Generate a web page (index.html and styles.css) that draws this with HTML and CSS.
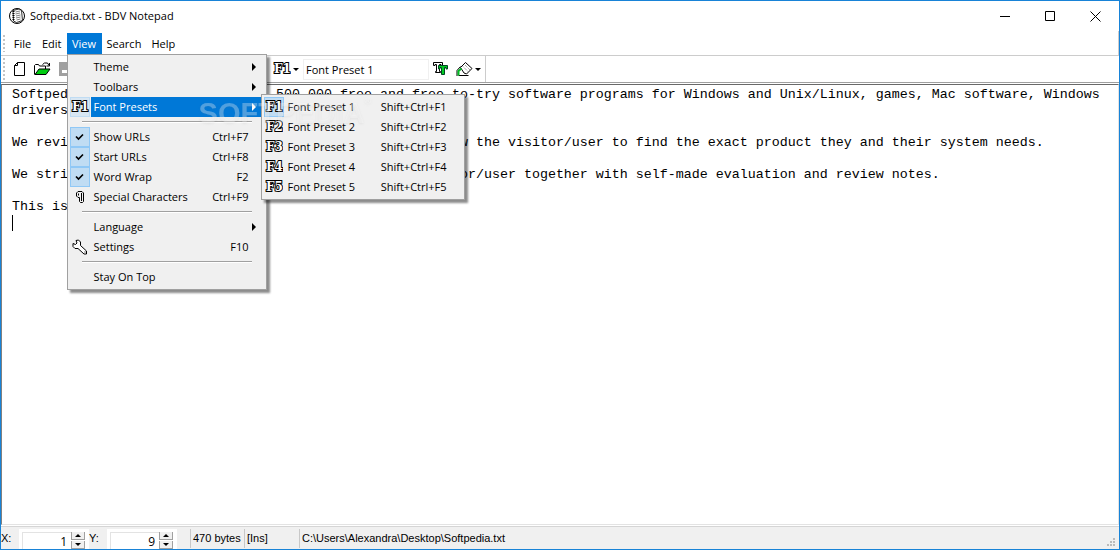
FILE: index.html
```
<!DOCTYPE html>
<html lang="en">
<head>
<meta charset="utf-8">
<title>Softpedia.txt - BDV Notepad</title>
<link rel="stylesheet" href="styles.css">
</head>
<body>
<div class="window">
  <header class="titlebar">
    <svg class="app-icon" width="18" height="18" viewBox="0 0 18 18" fill="none" stroke="#000">
      <circle cx="9" cy="9" r="7.5" fill="#fff"/>
      <path d="M5 3.500l6-1.500 2.500 1.500 1 10-6 2-3-1.500z" fill="#fff" stroke-width=".8"/>
      <path d="M7.500 5l4.500-1M7.500 7l4.500-1M8 9l4.500-1M8 11l4.500-1M8.500 13l4-1" stroke-width=".5"/>
      <path d="M5.500 4v10" stroke-dasharray="1 1" stroke-width="2"/>
    </svg>
    <h1 class="title">Softpedia.txt - BDV Notepad</h1>
    <div class="caption">
      <button class="caption-btn" aria-label="Minimize"><svg width="11" height="11" viewBox="0 0 11 11"><path d="M0 5.500h10" stroke="#000"/></svg></button>
      <button class="caption-btn" aria-label="Maximize"><svg width="11" height="11" viewBox="0 0 11 11"><path d="M.5.5h9v9h-9z" fill="none" stroke="#000"/></svg></button>
      <button class="caption-btn" aria-label="Close"><svg width="11" height="11" viewBox="0 0 11 11"><path d="M.5.5l10 10M10.500.5l-10 10" stroke="#000"/></svg></button>
    </div>
  </header>

  <nav class="menubar">
    <span class="grip"></span>
    <button class="menu-btn">File</button>
    <button class="menu-btn">Edit</button>
    <div class="menu-host">
      <button class="menu-btn active">View</button>
      <div class="menu main-menu" role="menu">
        <button class="item" role="menuitem"><span class="icon"></span><span class="label">Theme</span><span class="arrow"></span></button>
        <button class="item" role="menuitem"><span class="icon"></span><span class="label">Toolbars</span><span class="arrow"></span></button>
        <div class="sub-host">
          <button class="item selected" role="menuitem"><span class="icon soft"><svg width="18" height="14"><text class="glyph" x="1" y="11">F1</text></svg></span><span class="label">Font Presets</span><span class="arrow"></span></button>
          <div class="menu sub-menu" role="menu">
            <button class="item" role="menuitem"><span class="icon checked"><svg width="18" height="14"><text class="glyph" x="1" y="11">F1</text></svg></span><span class="label">Font Preset 1</span><span class="keys">Shift+Ctrl+F1</span></button>
            <button class="item" role="menuitem"><span class="icon"><svg width="18" height="14"><text class="glyph" x="1" y="11">F2</text></svg></span><span class="label">Font Preset 2</span><span class="keys">Shift+Ctrl+F2</span></button>
            <button class="item" role="menuitem"><span class="icon"><svg width="18" height="14"><text class="glyph" x="1" y="11">F3</text></svg></span><span class="label">Font Preset 3</span><span class="keys">Shift+Ctrl+F3</span></button>
            <button class="item" role="menuitem"><span class="icon"><svg width="18" height="14"><text class="glyph" x="1" y="11">F4</text></svg></span><span class="label">Font Preset 4</span><span class="keys">Shift+Ctrl+F4</span></button>
            <button class="item" role="menuitem"><span class="icon"><svg width="18" height="14"><text class="glyph" x="1" y="11">F5</text></svg></span><span class="label">Font Preset 5</span><span class="keys">Shift+Ctrl+F5</span></button>
          </div>
        </div>
        <div class="sep"></div>
        <button class="item" role="menuitem"><span class="icon checked"><svg width="9" height="8" viewBox="0 0 9 8"><path d="M1 3.500l2.500 2.500 4.500-4.500" fill="none" stroke="#000" stroke-width="1.700"/></svg></span><span class="label">Show URLs</span><span class="keys">Ctrl+F7</span></button>
        <button class="item" role="menuitem"><span class="icon checked"><svg width="9" height="8" viewBox="0 0 9 8"><path d="M1 3.500l2.500 2.500 4.500-4.500" fill="none" stroke="#000" stroke-width="1.700"/></svg></span><span class="label">Start URLs</span><span class="keys">Ctrl+F8</span></button>
        <button class="item" role="menuitem"><span class="icon checked"><svg width="9" height="8" viewBox="0 0 9 8"><path d="M1 3.500l2.500 2.500 4.500-4.500" fill="none" stroke="#000" stroke-width="1.700"/></svg></span><span class="label">Word Wrap</span><span class="keys">F2</span></button>
        <button class="item" role="menuitem"><span class="icon"><svg width="8" height="12" viewBox="0 0 8 12" fill="none" stroke="#000"><path d="M3.500 6.500H2L.5 5V2L2 .5h4L7.500 2v8.500l-1 1h-2l-1-1zM5.500 2v8M2.500 2.500v2"/></svg></span><span class="label">Special Characters</span><span class="keys">Ctrl+F9</span></button>
        <div class="sep"></div>
        <button class="item" role="menuitem"><span class="icon"></span><span class="label">Language</span><span class="arrow"></span></button>
        <button class="item" role="menuitem"><span class="icon"><svg width="16" height="16" viewBox="0 0 16 16" fill="#fff" stroke="#000"><path d="M4 1.500l1 2.500-1.500 1.500L1 4.500v3L3 9.500h3l6 5.500h2.500V12L8.500 6.500V3L6.500 1z"/><path d="M12.500 13h1"/></svg></span><span class="label">Settings</span><span class="keys">F10</span></button>
        <div class="sep"></div>
        <button class="item" role="menuitem"><span class="icon"></span><span class="label">Stay On Top</span></button>
        <div class="watermark">SOFTPEDIA<sup class="mark">®</sup></div>
      </div>
    </div>
    <button class="menu-btn">Search</button>
    <button class="menu-btn">Help</button>
  </nav>

  <div class="toolbar">
    <div class="tools file-tools">
      <span class="grip"></span>
      <button class="tool" aria-label="New"><svg width="12" height="14" viewBox="0 0 12 14"><path d="M3.500.5h7v13H.5v-10zM3.500.5v3h-3" fill="#fff" stroke="#000"/></svg></button>
      <button class="tool" aria-label="Open"><svg width="17" height="14" viewBox="0 0 17 14"><path d="M.5 12.500v-9l1-1h3l1 1.500h6v3" fill="#fff" stroke="#000"/><path d="M1 12.500l4-5.500h11l-4 5.500z" fill="#0c1" stroke="#000"/><path d="M8.500 2.500l2-1.500h3l1.500 2.500M15.500 1v3h-3" fill="none" stroke="#000"/></svg></button>
      <button class="tool" aria-label="Save" disabled><svg width="14" height="14" viewBox="0 0 14 14"><path d="M0 0h14v14H0z" fill="#a0a0a0"/><path d="M3 8h8v3H3z" fill="#fff"/></svg></button>
    </div>
    <div class="tools font-tools">
      <button class="tool drop" aria-label="Font preset list"><svg width="18" height="14"><text class="glyph" x="1" y="11">F1</text></svg><span class="caret"></span></button>
      <input class="preset" type="text" aria-label="Font preset" value="Font Preset 1">
      <button class="tool" aria-label="Font"><svg width="15" height="14" viewBox="0 0 15 14"><path d="M.5.5h9v3H8v-1H6.500v7h1v1h-5v-1h1v-7H2v1H.5z" fill="#fff" stroke="#000"/><path d="M5.500 3.500h9v3.500H13V5.500h-1.500v7h-3v-7H7V7H5.500z" fill="#0c2" stroke="#042"/></svg></button>
      <button class="tool drop" aria-label="Highlight"><svg width="17" height="15" viewBox="0 0 17 15"><path d="M4.500 5.500l5-5 6.500 6-5.500 5.500-2.500-1z" fill="#fff" stroke="#000"/><path d="M7 4.500l5 5M9 3l5 5" stroke="#777" stroke-dasharray="1 1"/><path d="M4.500 4.500L1 8.500v5.500M2.500 13.500h10" fill="none" stroke="#000"/><path d="M5.500 6.500L2.500 9v4.500" fill="none" stroke="#0b2" stroke-width="2"/></svg><span class="caret"></span></button>
    </div>
  </div>

  <main class="editor">
    <p class="line">Softpedia is a library of over 1,500,000 free and free-to-try software programs for Windows and Unix/Linux, games, Mac software, Windows<br>drivers and IT articles.</p>
    <p class="line">We review and categorize these products in order to allow the visitor/user to find the exact product they and their system needs.</p>
    <p class="line">We strive to deliver only the best products to the visitor/user together with self-made evaluation and review notes.</p>
    <p class="line">This is a text file.</p>
    <span class="cursor"></span>
  </main>

  <footer class="status">
    <label class="axis" for="pos-x">X:</label>
    <div class="spin"><input class="num" id="pos-x" type="text" value="1"><span class="steps"><button class="step" aria-label="X up"><span class="up"></span></button><button class="step" aria-label="X down"><span class="down"></span></button></span></div>
    <label class="axis" for="pos-y">Y:</label>
    <div class="spin"><input class="num" id="pos-y" type="text" value="9"><span class="steps"><button class="step" aria-label="Y up"><span class="up"></span></button><button class="step" aria-label="Y down"><span class="down"></span></button></span></div>
    <span class="cell size">470 bytes</span>
    <span class="cell mode">[Ins]</span>
    <span class="cell path">C:\Users\Alexandra\Desktop\Softpedia.txt</span>
    <svg class="resize" width="9" height="9" viewBox="0 0 9 9" fill="#bbb"><path d="M6 0h2v2H6zM3 3h2v2H3zM6 3h2v2H6zM0 6h2v2H0zM3 6h2v2H3zM6 6h2v2H6z"/></svg>
  </footer>
</div>
</body>
</html>
```
FILE: styles.css
```
* { box-sizing: border-box; }
body { margin: 0; }
button, input {
  font: inherit; color: inherit; background: none;
  border: 0; padding: 0; margin: 0; border-radius: 0; outline: 0;
}
svg { display: block; flex: none; }

.window {
  display: flex; flex-direction: column;
  height: 100vh; overflow: hidden;
  border: 1px solid #1883d7;
  background: #fff; color: #000;
  font: 11px/16px "Open Sans", "Noto Sans", sans-serif;
}

.titlebar { display: flex; align-items: center; height: 30px; padding-left: 7px; flex: none; }
.title { margin: 0 auto 0 4px; font-size: 11px; font-weight: 400; }
.caption { display: flex; margin-right: 1px; }
.caption-btn { display: flex; align-items: center; justify-content: center; width: 45px; height: 28px; }

.grip {
  width: 2px; align-self: stretch; margin: 2px 0 2px 2px; flex: none;
  background: repeating-linear-gradient(#c4c4c4 0 2px, #fff 2px 4px);
}
.menubar {
  display: flex; align-items: stretch; height: 25px; padding: 2px 0 1px; flex: none;
  border-bottom: 1px solid #ccc; border-right: 1px solid #ccc;
}
.menubar > .grip { margin-right: 3px; }
.menu-btn { height: 21px; padding: 0 5px; min-width: 29px; }
.menu-host { position: relative; }
.active { background: #0078d7; color: #fff; min-width: 35px; }

.menu {
  position: absolute; z-index: 2; padding: 2px;
  background: #f0f0f0; color: #000; border: 1px solid #a0a0a0;
  box-shadow: 3px 3px 2px rgba(0, 0, 0, .45);
}
.main-menu { left: 0; top: 21px; width: 200px; }
.sub-menu { left: 191px; top: -3px; width: 204px; }
.sub-host { position: relative; }
.item { display: flex; align-items: center; width: 100%; height: 20px; text-align: left; white-space: nowrap; }
.icon { display: flex; align-items: center; justify-content: center; width: 20px; height: 20px; margin-right: 1px; flex: none; }
.checked { background: #c0dcf3; border: 1px solid #90c8f6; }
.soft { background: #d8e6f2; border: 1px solid #c0dcf3; }
.label { flex: 1; padding-left: 3px; line-height: 20px; }
.keys { padding-right: 15px; }
.selected .label { background: #0078d7; color: #fff; }
.selected .arrow { background: #0078d7; }
.arrow { position: relative; width: 13px; height: 20px; }
.arrow::before {
  content: ""; position: absolute; left: 1px; top: 6px;
  border: 4px solid transparent; border-left-color: currentColor; border-right: 0;
}
.selected .arrow { color: #fff; }
.sep { height: 10px; padding: 4px 12px; }
.sep::before { content: ""; display: block; height: 1px; background: #a0a0a0; border-bottom: 1px solid #fff; }
.glyph {
  font: bold 12px "DejaVu Serif", serif; fill: #fff;
  stroke: #000; stroke-width: 2px; paint-order: stroke;
}
.watermark {
  position: absolute; left: 131px; top: 42px; z-index: 3; pointer-events: none;
  font: bold 29px/32px "Liberation Sans", Arial, sans-serif;
  color: rgba(255, 255, 255, .3); filter: drop-shadow(0 1px 1px rgba(110, 110, 110, .3));
}
.mark { font-size: 9px; line-height: 9px; vertical-align: top; }

.toolbar { display: flex; height: 27px; flex: none; border-bottom: 1px solid #a0a0a0; }
.tools { display: flex; align-items: center; height: 100%; }
.file-tools { width: 270px; gap: 8px; }
.file-tools .grip { margin-right: 1px; }
.font-tools { border-right: 1px solid #ccc; padding-left: 2px; width: 215px; }
.tool { display: flex; align-items: center; justify-content: center; flex: none; }
.drop { gap: 2px; }
.caret { border: 3px solid transparent; border-top-color: #000; border-bottom: 0; }
.preset { width: 126px; height: 21px; padding: 0 2px; margin: 0 4px; border: 1px solid #f0f0f0; }
.font-tools .preset + .tool { margin-right: 8px; }

.editor {
  flex: 1; min-height: 0; padding: 2px 9px;
  border: 1px solid #e3e3e3; border-top: 1px solid #696969; border-left: 1px solid #808080;
  font: 10pt/16px "Liberation Mono", "Courier New", monospace;
}
.line { margin: 0 0 16px 1px; white-space: pre; }
.line:nth-last-of-type(1) { margin-bottom: 0; }
.cursor { display: block; width: 1px; height: 16px; margin-left: 1px; background: #000; }

.toolbar { margin-bottom: 1px; }

.status {
  display: flex; align-items: stretch; height: 24px; flex: none;
  border-top: 1px solid #fff; background: #f0f0f0;
  font: 11px/16px "Liberation Sans", Arial, sans-serif;
  box-shadow: inset 0 1px #d5d5d5;
}
.axis { width: 18px; align-self: center; }
.spin { display: flex; align-items: stretch; width: 70px; margin-top: 3px; padding: 3px 4px 0 3px; background: #fff; }
.num { flex: 1; min-width: 0; text-align: right; padding-right: 4px; border: solid #e3e3e3; border-width: 1px 0 0 1px; font: 12px/15px "Open Sans", sans-serif; }
.steps { display: flex; flex-direction: column; width: 14px; gap: 1px; }
.step { flex: 1; display: flex; align-items: center; justify-content: center; background: #f0f0f0; border: solid #a0a0a0; border-width: 0 1px 1px; }
.up, .down { border: 3px solid transparent; }
.up { border-bottom-color: #000; border-top: 0; }
.down { border-top-color: #000; border-bottom: 0; }
.cell { border-left: 1px solid #c8c8c8; padding: 0 2px; margin: 3px 0 1px; line-height: 18px; }
.size { width: 54px; margin-left: 13px; }
.mode { width: 55px; }
.path { flex: 1; }
.resize { align-self: flex-end; margin: 0 3px 2px 0; }
```
